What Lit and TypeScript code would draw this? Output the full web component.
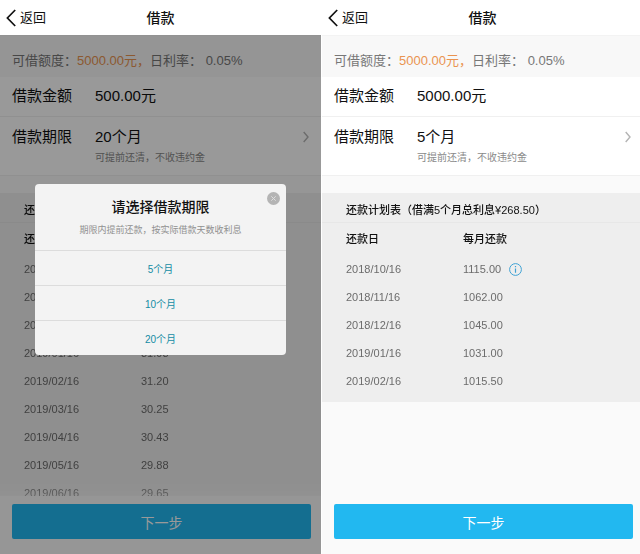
import { LitElement, html, css, nothing } from "lit";
import { customElement, property } from "lit/decorators.js";

interface Payment {
  date: string;
  amount: string;
  info?: boolean;
}

interface Loan {
  amount: string;
  term: string;
  planTitle: string;
  payments: Payment[];
  picking?: boolean;
}

const loans: Loan[] = [
  {
    amount: "500.00元",
    term: "20个月",
    planTitle: "还款计划表（借满20个月总利息¥105.25）",
    picking: true,
    payments: [
      { date: "2018/10/16", amount: "32.75" },
      { date: "2018/11/16", amount: "32.36" },
      { date: "2018/12/16", amount: "31.98" },
      { date: "2019/01/16", amount: "31.98" },
      { date: "2019/02/16", amount: "31.20" },
      { date: "2019/03/16", amount: "30.25" },
      { date: "2019/04/16", amount: "30.43" },
      { date: "2019/05/16", amount: "29.88" },
      { date: "2019/06/16", amount: "29.65" },
    ],
  },
  {
    amount: "5000.00元",
    term: "5个月",
    planTitle: "还款计划表（借满5个月总利息¥268.50）",
    payments: [
      { date: "2018/10/16", amount: "1115.00", info: true },
      { date: "2018/11/16", amount: "1062.00" },
      { date: "2018/12/16", amount: "1045.00" },
      { date: "2019/01/16", amount: "1031.00" },
      { date: "2019/02/16", amount: "1015.50" },
    ],
  },
];

const reset = css`
  * {
    box-sizing: border-box;
  }
  button {
    margin: 0;
    padding: 0;
    border: 0;
    background: none;
    color: inherit;
    font: inherit;
    cursor: pointer;
  }
  h1,
  h2,
  p {
    margin: 0;
  }
  svg {
    display: block;
    fill: none;
    stroke: currentColor;
  }
`;

@customElement("term-picker")
export class TermPicker extends LitElement {
  static styles = [
    reset,
    css`
      :host {
        display: block;
      }
      .dialog {
        position: relative;
        border-radius: 4px;
        background: #f3f3f3;
        text-align: center;
        overflow: hidden;
      }
      .head {
        padding: 12px 8px;
        height: 66px;
      }
      h2 {
        font-size: 14px;
        line-height: 22px;
        font-weight: 500;
        color: #111;
      }
      p {
        margin-top: 4px;
        font-size: 9px;
        line-height: 16px;
        color: #909090;
      }
      .close {
        position: absolute;
        top: 8px;
        right: 6px;
        color: #dedede;
      }
      .option {
        display: block;
        width: 100%;
        height: 35px;
        border-top: 1px solid #dcdcdc;
        font-size: 10px;
        color: #148ca4;
      }
    `,
  ];

  render() {
    return html`
      <div class="dialog" role="dialog" aria-labelledby="title">
        <button class="close" aria-label="关闭">
          <svg width="13" height="13" viewBox="0 0 13 13">
            <circle cx="6.5" cy="6.5" r="6.5" fill="#b4b4b4" stroke="none" />
            <path d="M4.3 4.3l4.4 4.4M8.7 4.3l-4.4 4.4" />
          </svg>
        </button>
        <div class="head">
          <h2 id="title">请选择借款期限</h2>
          <p>期限内提前还款，按实际借款天数收利息</p>
        </div>
        ${["5个月", "10个月", "20个月"].map(
          (t) => html`<button class="option">${t}</button>`
        )}
      </div>
    `;
  }
}

@customElement("loan-screen")
export class LoanScreen extends LitElement {
  @property({ attribute: false }) loan!: Loan;

  static styles = [
    reset,
    css`
      :host {
        position: relative;
        display: flex;
        flex-direction: column;
        min-width: 0;
        height: 100vh;
        background: #fafafa;
        color: #111;
      }
      .bar {
        display: grid;
        grid-template-columns: 1fr auto 1fr;
        align-items: center;
        flex: none;
        height: 35px;
        padding: 0 6px;
        background: #fff;
      }
      .back {
        display: flex;
        align-items: center;
        gap: 4px;
        justify-self: start;
        font-size: 13px;
        line-height: 20px;
      }
      h1 {
        font-size: 14px;
        line-height: 20px;
        font-weight: 500;
      }
      .quota {
        flex: none;
        height: 42px;
        padding: 8px 12px 0;
        border-top: 1px solid #f3f3f3;
        background: #f8f8f8;
        font-size: 13px;
        line-height: 34px;
        white-space: nowrap;
        color: #777;
      }
      .quota strong {
        font-weight: 400;
        color: #ea9450;
      }
      .row {
        display: grid;
        grid-template-columns: 83px 1fr auto;
        align-items: center;
        flex: none;
        width: 100%;
        padding: 7px 12px 8px;
        border-bottom: 1px solid #f0f0f0;
        background: #fff;
        text-align: left;
        font-size: 15px;
        line-height: 24px;
      }
      .row.term {
        padding-top: 8px;
      }
      .row .note {
        grid-column: 2;
        font-size: 10px;
        line-height: 18px;
        color: #8a8a8a;
      }
      .chevron {
        color: #b4b4b4;
      }
      .scroll {
        flex: 1;
        min-height: 0;
        margin-top: 17px;
        overflow: hidden;
        -webkit-mask-image: linear-gradient(to top, rgba(0, 0, 0, 0.6), #000 16px);
        mask-image: linear-gradient(to top, rgba(0, 0, 0, 0.6), #000 16px);
      }
      .plan {
        padding-bottom: 7px;
        background: #eee;
      }
      table {
        width: 100%;
        border-collapse: collapse;
        table-layout: fixed;
        font-size: 11px;
        line-height: 16px;
        color: #6c6c6c;
      }
      caption {
        height: 30px;
        padding: 9px 24px 0;
        border-bottom: 1px solid #e7e7e7;
        text-align: left;
        font-weight: 500;
        white-space: nowrap;
        color: #111;
      }
      th {
        height: 32px;
        font-weight: 500;
        color: #111;
      }
      td {
        height: 28px;
      }
      th,
      td {
        padding: 0;
        text-align: left;
      }
      th:first-child,
      td:first-child {
        width: 141px;
        padding-left: 24px;
      }
      .sum {
        display: flex;
        align-items: center;
        gap: 8px;
      }
      .info {
        color: #3fa2d4;
      }
      .foot {
        flex: none;
        padding: 8px 10px 15px 12px;
      }
      .next {
        display: block;
        width: 100%;
        height: 35px;
        border-radius: 2px;
        background: #22b8f0;
        font-size: 14px;
        color: #fff;
      }
      .shade {
        position: absolute;
        inset: 35px 0 0;
        padding: 149px 35px 0;
        background: rgba(0, 0, 0, 0.4);
      }
    `,
  ];

  render() {
    const { amount, term, planTitle, payments, picking } = this.loan;
    return html`
      <header class="bar">
        <button class="back">
          <svg width="10" height="18" viewBox="0 0 10 18" stroke-width="1.7">
            <path d="M9.2 1L1.4 9l7.8 8" />
          </svg>
          返回
        </button>
        <h1>借款</h1>
      </header>
      <p class="quota">可借额度：<strong>5000.00元，</strong>日利率： 0.05%</p>
      <div class="row"><span>借款金额</span><span>${amount}</span></div>
      <button class="row term">
        <span>借款期限</span>
        <span>${term}</span>
        <svg class="chevron" width="6" height="12" viewBox="0 0 6 12" stroke-width="1.4">
          <path d="M.7 1L5 6 .7 11" />
        </svg>
        <span class="note">可提前还清，不收违约金</span>
      </button>
      <div class="scroll">
        <div class="plan">
          <table>
            <caption>${planTitle}</caption>
            <thead>
              <tr><th scope="col">还款日</th><th scope="col">每月还款</th></tr>
            </thead>
            <tbody>
              ${payments.map(
                (p) => html`<tr>
                  <td>${p.date}</td>
                  <td>
                    <div class="sum">
                      ${p.amount}
                      ${p.info
                        ? html`<button class="info" aria-label="说明">
                            <svg width="13" height="13" viewBox="0 0 13 13">
                              <circle cx="6.5" cy="6.5" r="5.9" />
                              <path d="M6.5 5.4v4.4M6.5 3v1.3" stroke-width="1.2" />
                            </svg>
                          </button>`
                        : nothing}
                    </div>
                  </td>
                </tr>`
              )}
            </tbody>
          </table>
        </div>
      </div>
      <footer class="foot"><button class="next">下一步</button></footer>
      ${picking ? html`<div class="shade"><term-picker></term-picker></div>` : nothing}
    `;
  }
}

@customElement("app-root")
export class AppRoot extends LitElement {
  static styles = css`
    :host {
      display: grid;
      grid-template-columns: repeat(2, calc(50% + 1px));
      column-gap: 1px;
      overflow: hidden;
      background: #fff;
      font-family: "Liberation Sans", "Noto Sans CJK SC", sans-serif;
    }
  `;

  render() {
    return loans.map((l) => html`<loan-screen .loan=${l}></loan-screen>`);
  }
}
